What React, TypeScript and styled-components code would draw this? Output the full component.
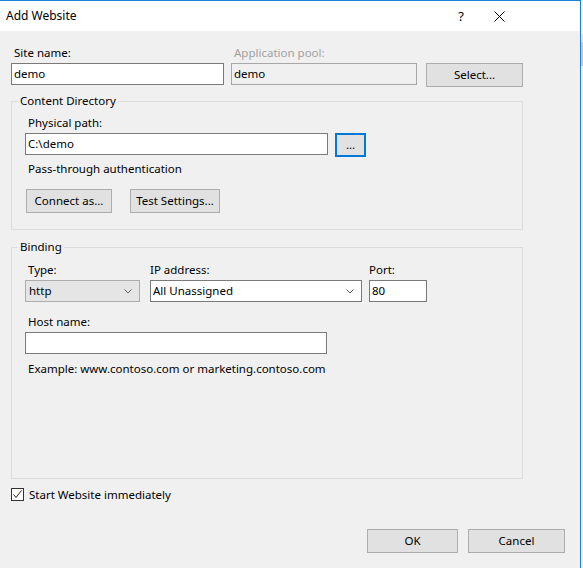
import React from "react";
import styled, { createGlobalStyle } from "styled-components";

const GlobalStyle = createGlobalStyle`
  html, body { margin: 0; padding: 0; background: #f0f0f0; }
  body {
    font-family: "Noto Sans", "Segoe UI", sans-serif;
    font-size: 11.5px;
    color: #000;
  }
  * { box-sizing: border-box; }
`;

const Page = styled.div`
  display: flex;
  width: 583px;
  height: 568px;
  overflow: hidden;
`;

const Dialog = styled.div`
  width: 581px;
  height: 568px;
  display: flex;
  flex-direction: column;
  border-top: 1px solid #1883d7;
  border-right: 1px solid #1883d7;
  background: #f0f0f0;
`;

const Behind = styled.div`
  flex: 1;
  background: linear-gradient(#f5f8fb 0 34px, #dbe6f1 34px 42px, #c8c8c8 42px 66px, #f3f3f3 66px);
`;

const TitleBar = styled.div`
  height: 30px;
  background: #fff;
  display: flex;
  align-items: center;
  padding-left: 6px;
`;

const Title = styled.div`
  flex: 1;
  font-size: 12px;
  line-height: 16px;
`;

const CaptionButton = styled.div<{ $width: number }>`
  width: ${(p) => p.$width}px;
  height: 30px;
  display: flex;
  align-items: center;
  justify-content: center;
  font-size: 13px;
`;

const CaptionSpacer = styled.div`
  width: 58px;
`;

const Body = styled.div`
  flex: 1;
  display: flex;
  flex-direction: column;
  padding: 14px 0 0 11px;
`;

const Row = styled.div<{ $mt?: number }>`
  display: flex;
  align-items: flex-start;
  margin-top: ${(p) => p.$mt ?? 0}px;
`;

const Field = styled.div<{ $width: number; $ml?: number }>`
  display: flex;
  flex-direction: column;
  width: ${(p) => p.$width}px;
  margin-left: ${(p) => p.$ml ?? 0}px;
`;

const Label = styled.div<{ $indent?: number; $disabled?: boolean; $mt?: number }>`
  line-height: 16px;
  height: 16px;
  margin-bottom: 2px;
  margin-top: ${(p) => p.$mt ?? 0}px;
  padding-left: ${(p) => p.$indent ?? 0}px;
  color: ${(p) => (p.$disabled ? "#a0a0a0" : "#000")};
  white-space: nowrap;
`;

const TextBox = styled.div<{ $width?: number; $readonly?: boolean }>`
  height: 22px;
  width: ${(p) => (p.$width ? `${p.$width}px` : "100%")};
  border: 1px solid ${(p) => (p.$readonly ? "#a8a8a8" : "#7a7a7a")};
  background: ${(p) => (p.$readonly ? "#f0f0f0" : "#fff")};
  padding: 0 2px;
  line-height: 20px;
  white-space: nowrap;
`;

const Combo = styled.div<{ $flat?: boolean }>`
  height: 22px;
  width: 100%;
  border: 1px solid ${(p) => (p.$flat ? "#acacac" : "#7a7a7a")};
  background: ${(p) => (p.$flat ? "#e5e5e5" : "#fff")};
  display: flex;
  align-items: center;
  padding: 0 7px 0 ${(p) => (p.$flat ? 3 : 2)}px;
  line-height: 20px;
`;

const ComboText = styled.span`
  flex: 1;
`;

const Button = styled.div<{ $width: number; $ml?: number; $focused?: boolean; $mt?: number }>`
  width: ${(p) => p.$width}px;
  height: 24px;
  margin-left: ${(p) => p.$ml ?? 0}px;
  margin-top: ${(p) => p.$mt ?? 0}px;
  flex: none;
  background: #e1e1e1;
  border: ${(p) => (p.$focused ? "2px solid #0078d7" : "1px solid #adadad")};
  display: flex;
  align-items: center;
  justify-content: center;
  line-height: 16px;
  white-space: nowrap;
`;

const Group = styled.fieldset<{ $mt: number; $minHeight?: number }>`
  margin: ${(p) => p.$mt}px 0 0 0;
  width: 512px;
  min-width: 0;
  border: 1px solid #dcdcdc;
  padding: 0;
  min-height: ${(p) => (p.$minHeight ? `${p.$minHeight}px` : "auto")};
`;

const GroupBody = styled.div<{ $pt: number; $pb: number }>`
  display: flex;
  flex-direction: column;
  padding: ${(p) => p.$pt}px 0 ${(p) => p.$pb}px 13px;
`;

const Legend = styled.legend`
  margin-left: 6px;
  padding: 0 2px;
  line-height: 16px;
  height: 16px;
`;

const Note = styled.div<{ $mt: number; $indent?: number }>`
  margin-top: ${(p) => p.$mt}px;
  padding-left: ${(p) => p.$indent ?? 3}px;
  line-height: 16px;
  white-space: nowrap;
`;

const CheckRow = styled.div`
  display: flex;
  align-items: center;
  margin-top: 7px;
  height: 16px;
`;

const CheckBox = styled.div`
  width: 13px;
  height: 13px;
  border: 1px solid #333;
  background: #fff;
  display: flex;
  align-items: center;
  justify-content: center;
  margin-right: 5px;
`;

const Footer = styled.div`
  display: flex;
  justify-content: flex-end;
  padding-right: 15px;
  margin-top: 27px;
`;

const Chevron = () => (
  <svg width="8" height="5" viewBox="0 0 8 5">
    <polyline points="0.5,0.5 4,4 7.5,0.5" fill="none" stroke="#606060" strokeWidth="1" />
  </svg>
);

export default function App() {
  return (
    <>
      <GlobalStyle />
      <Page>
        <Dialog>
          <TitleBar>
            <Title>Add Website</Title>
            <CaptionButton $width={30}>?</CaptionButton>
            <CaptionButton $width={46}>
              <svg width="11" height="11" viewBox="0 0 11 11">
                <path d="M0.5 0.5 L10.5 10.5 M10.5 0.5 L0.5 10.5" stroke="#000" strokeWidth="1" />
              </svg>
            </CaptionButton>
            <CaptionSpacer />
          </TitleBar>
          <Body>
            <Row>
              <Field $width={213}>
                <Label $indent={3}>Site name:</Label>
                <TextBox>demo</TextBox>
              </Field>
              <Field $width={186} $ml={7}>
                <Label $indent={3} $disabled>Application pool:</Label>
                <TextBox $readonly>demo</TextBox>
              </Field>
              <Button $width={97} $ml={9} $mt={18}>Select...</Button>
            </Row>

            <Group $mt={6}>
              <Legend>Content Directory</Legend>
              <GroupBody $pt={6} $pb={16}>
                <Label $indent={3}>Physical path:</Label>
                <Row>
                  <TextBox $width={303}>C:\demo</TextBox>
                  <Button $width={31} $ml={7} $focused>...</Button>
                </Row>
                <Note $mt={4}>Pass-through authentication</Note>
                <Row $mt={12}>
                  <Button $width={86} $ml={1}>Connect as...</Button>
                  <Button $width={90} $ml={18}>Test Settings...</Button>
                </Row>
              </GroupBody>
            </Group>

            <Group $mt={9} $minHeight={240}>
              <Legend>Binding</Legend>
              <GroupBody $pt={7} $pb={0}>
                <Row>
                  <Field $width={115}>
                    <Label $indent={3}>Type:</Label>
                    <Combo $flat>
                      <ComboText>http</ComboText>
                      <Chevron />
                    </Combo>
                  </Field>
                  <Field $width={212} $ml={10}>
                    <Label $indent={0}>IP address:</Label>
                    <Combo>
                      <ComboText>All Unassigned</ComboText>
                      <Chevron />
                    </Combo>
                  </Field>
                  <Field $width={58} $ml={7}>
                    <Label $indent={0}>Port:</Label>
                    <TextBox>80</TextBox>
                  </Field>
                </Row>
                <Label $indent={3} $mt={12}>Host name:</Label>
                <TextBox $width={302}></TextBox>
                <Note $mt={7}>Example: www.contoso.com or marketing.contoso.com</Note>
              </GroupBody>
            </Group>

            <CheckRow>
              <CheckBox>
                <svg width="11" height="11" viewBox="0 0 11 11">
                  <polyline points="1.5,5.5 4,8.5 9.5,1.5" fill="none" stroke="#222" strokeWidth="1" />
                </svg>
              </CheckBox>
              Start Website immediately
            </CheckRow>

            <Footer>
              <Button $width={91}>OK</Button>
              <Button $width={97} $ml={10}>Cancel</Button>
            </Footer>
          </Body>
        </Dialog>
        <Behind />
      </Page>
    </>
  );
}
